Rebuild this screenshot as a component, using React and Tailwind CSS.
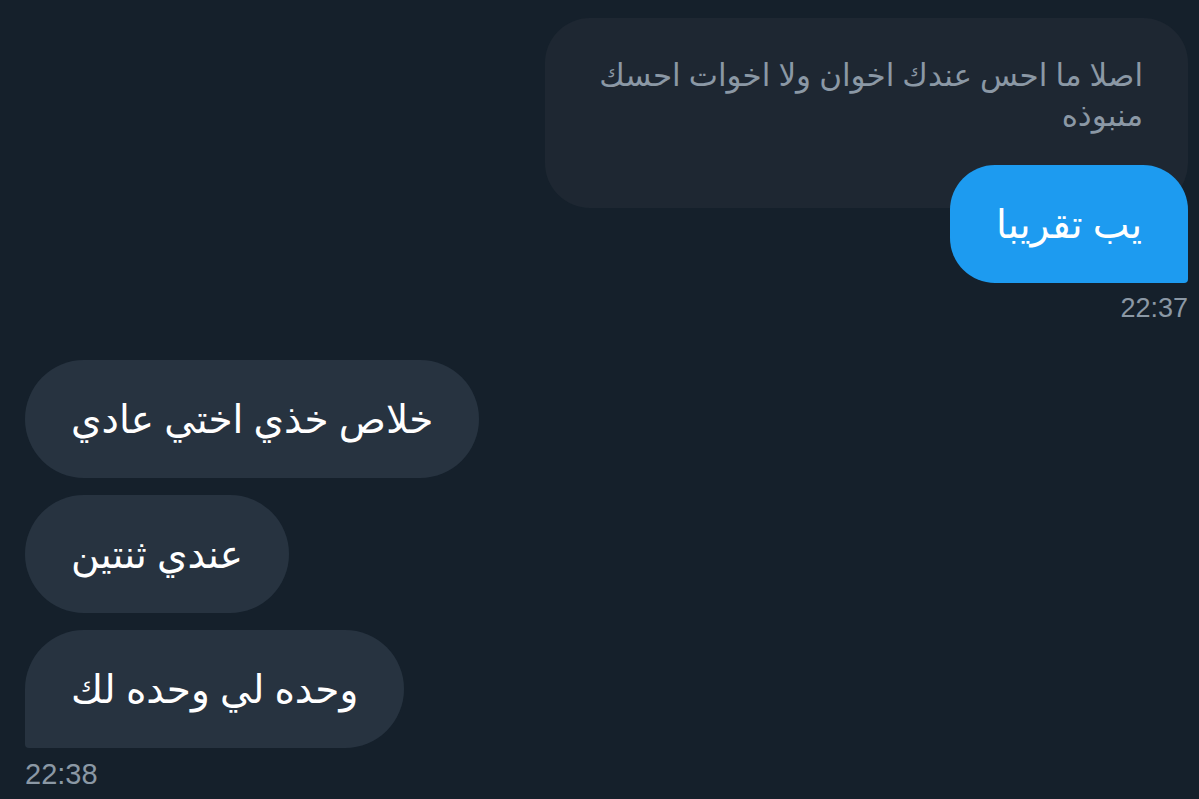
const arabic = { fontFamily: '"Noto Sans", "DejaVu Sans", sans-serif' };

const Bubble = ({ children, className }) => (
  <div dir="rtl" className={`h-[118px] flex items-center px-[46px] pb-[2px] text-[39px] leading-[48px] text-white whitespace-nowrap ${className}`}>
    {children}
  </div>
);

export default function App() {
  return (
    <div className="w-[1199px] h-[799px] overflow-hidden bg-[#15202b] flex flex-col" style={arabic}>
      {/* sent messages */}
      <div className="flex flex-col items-end pt-[18px] pr-[11px]">
        <div dir="rtl" className="w-[643px] h-[190px] rounded-[45px] bg-[#1e2732] px-[45px] pt-[36px] text-[31px] leading-[40px] text-[#8b98a5]">
          <div className="whitespace-nowrap">اصلا ما احس عندك اخوان ولا اخوات احسك</div>
          <div>منبوذه</div>
        </div>
        <Bubble className="relative -mt-[43px] bg-[#1d9bf0] rounded-[45px] rounded-br-[4px]">يب تقريبا</Bubble>
        <div className="mt-[9px] text-[27px] leading-[32px] text-[#8b98a5] font-['Liberation_Sans',sans-serif]">22:37</div>
      </div>

      {/* received messages */}
      <div className="flex flex-col items-start gap-[17px] pl-[25px] mt-[36px]">
        <Bubble className="bg-[#273340] rounded-[59px]">خلاص خذي اختي عادي</Bubble>
        <Bubble className="bg-[#273340] rounded-[59px]">عندي ثنتين</Bubble>
        <Bubble className="bg-[#273340] rounded-[59px] rounded-bl-[4px]">وحده لي وحده لك</Bubble>
      </div>
      <div className="pl-[25px] mt-[10px] text-[29px] leading-[32px] text-[#8b98a5] font-['Liberation_Sans',sans-serif]">22:38</div>
    </div>
  );
}
